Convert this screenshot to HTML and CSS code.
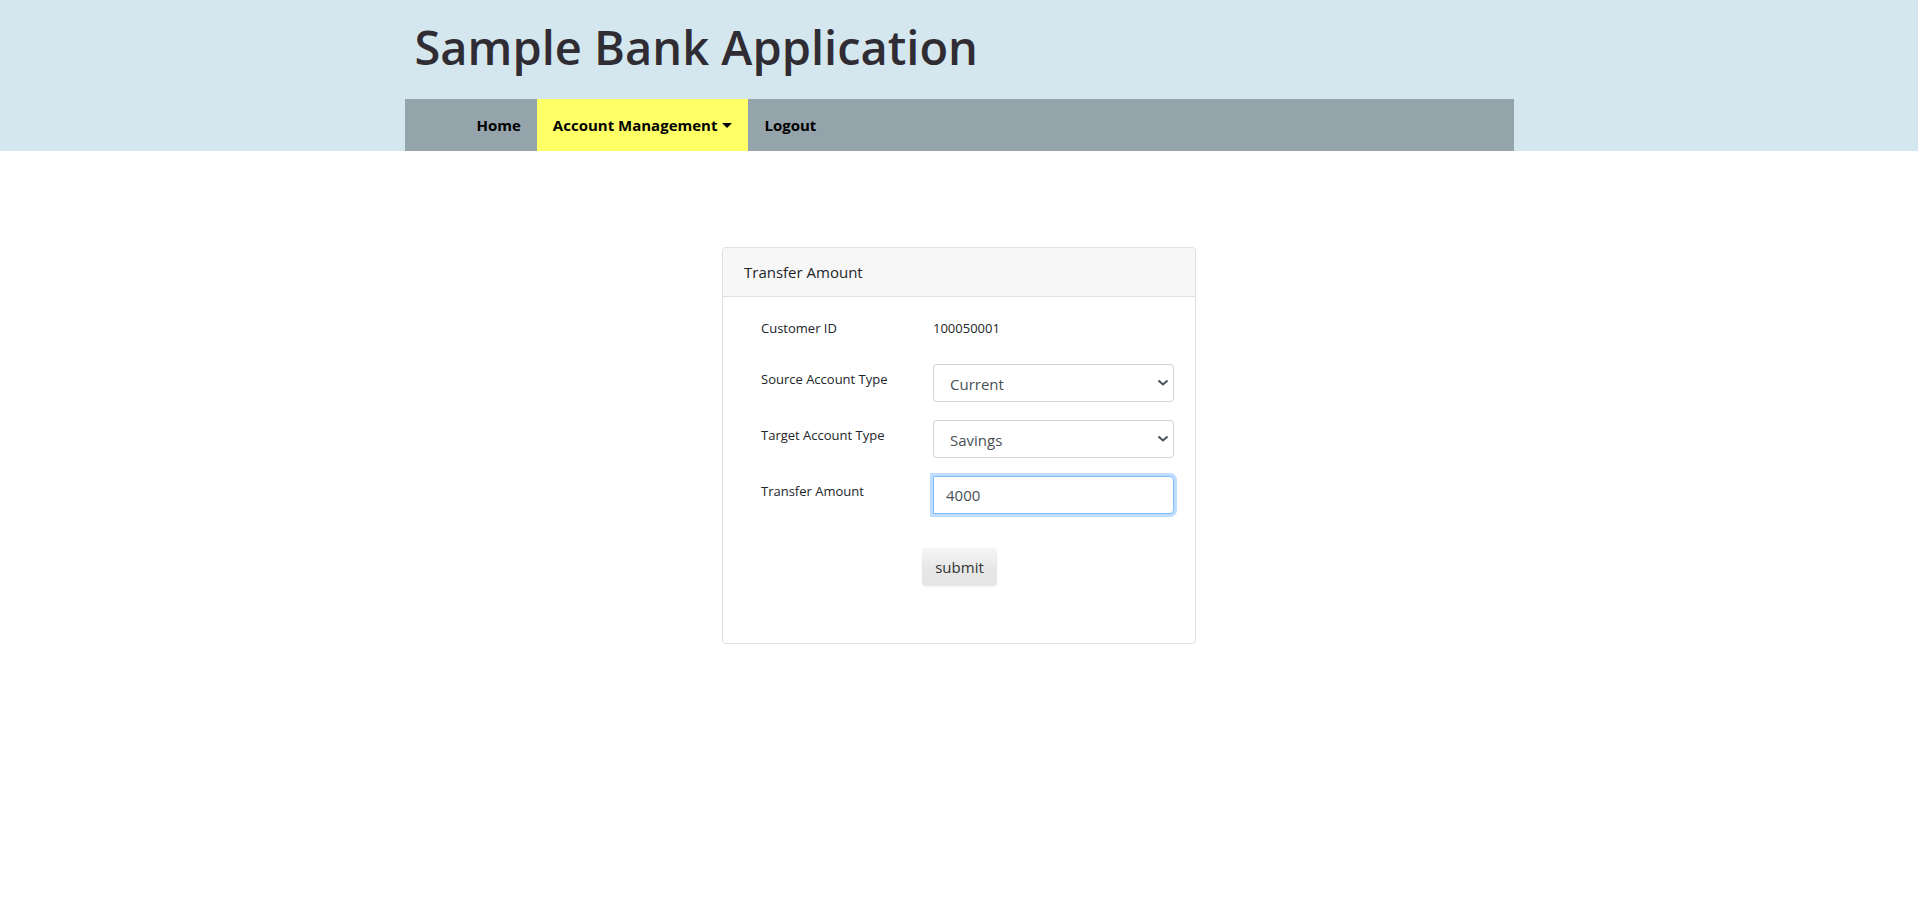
FILE: index.html
```html
<!DOCTYPE html>
<html lang="en">
<head>
<meta charset="utf-8">
<meta name="viewport" content="width=device-width, initial-scale=1">
<title>Sample Bank Application</title>
<link rel="stylesheet" href="styles.css">
</head>
<body>
<header class="site-header">
  <div class="container">
    <h1 class="site-title">Sample Bank Application</h1>
    <nav class="navbar">
      <a class="nav-link" href="#">Home</a>
      <a class="nav-link active" href="#">Account Management<span class="caret"></span></a>
      <a class="nav-link" href="#">Logout</a>
    </nav>
  </div>
</header>
<main class="main">
  <section class="card">
    <h2 class="card-header">Transfer Amount</h2>
    <form class="card-body">
      <div class="row id-row">
        <span class="label">Customer ID</span>
        <span class="value">100050001</span>
      </div>
      <div class="row">
        <label class="label" for="source">Source Account Type</label>
        <div class="select-wrap">
          <select class="control" id="source"><option>Current</option><option>Savings</option></select>
          <svg class="chevron" viewBox="0 0 12 8" aria-hidden="true"><path d="M1.500 1.500 6 5.500l4.500-4"/></svg>
        </div>
      </div>
      <div class="row">
        <label class="label" for="target">Target Account Type</label>
        <div class="select-wrap">
          <select class="control" id="target"><option>Savings</option><option>Current</option></select>
          <svg class="chevron" viewBox="0 0 12 8" aria-hidden="true"><path d="M1.500 1.500 6 5.500l4.500-4"/></svg>
        </div>
      </div>
      <div class="row">
        <label class="label" for="amount">Transfer Amount</label>
        <input class="control amount" id="amount" type="text" value="4000">
      </div>
      <button class="submit" type="submit">submit</button>
    </form>
  </section>
</main>
</body>
</html>
```
FILE: styles.css
```css
* { box-sizing: border-box; }

body {
  margin: 0;
  background: #fff;
  color: #212529;
  font: 15px/24px "Open Sans", "Noto Sans", sans-serif;
}

.site-header { background: #d4e7ee; }

.container {
  max-width: 1109px;
  margin: 0 auto;
}

.site-title {
  margin: 0;
  padding: 17px 10px 22px;
  color: #302c33;
  font-size: 47px;
  font-weight: 600;
  line-height: 60px;
}

.navbar {
  display: flex;
  padding-left: 56px;
  background: #95a3aa;
}

.nav-link {
  display: flex;
  align-items: center;
  padding: 14px 16px;
  color: #000;
  font-weight: 700;
  text-decoration: none;
}

.nav-link.active { background: #ffff66; }

.caret {
  margin-left: 5px;
  border: 5px solid transparent;
  border-top-color: #000;
  border-bottom: 0;
}

.main { padding: 96px 16px; }

.card {
  max-width: 474px;
  margin: 0 auto;
  border: 1px solid #dfdfdf;
  border-radius: 4px;
}

.card-header {
  margin: 0;
  padding: 12px 21px;
  border-bottom: 1px solid #dfdfdf;
  border-radius: 3px 3px 0 0;
  background: #f7f7f7;
  font-size: 15px;
  font-weight: 400;
}

.card-body {
  display: flex;
  flex-direction: column;
  gap: 18px;
  padding: 20px 21px 57px 38px;
}

.row {
  display: grid;
  grid-template-columns: 172px 1fr;
  align-items: start;
}

.id-row { padding-bottom: 7px; }

.label,
.value {
  padding-top: 4px;
  font-size: 13px;
  line-height: 22px;
}

.id-row .label,
.id-row .value { padding-top: 0; }

.select-wrap { position: relative; }

.control {
  display: block;
  width: 100%;
  height: 38px;
  padding: 2px 30px 0 16px;
  border: 1px solid #ced4da;
  border-radius: 4px;
  outline: 0;
  appearance: none;
  background: #fff;
  color: #495057;
  font: inherit;
}

.chevron {
  position: absolute;
  top: 15px;
  right: 5px;
  width: 12px;
  height: 8px;
  fill: none;
  stroke: #495057;
  stroke-width: 2;
  pointer-events: none;
}

.amount {
  padding: 0 12px;
  border-color: #80bdff;
  border-radius: 0 4px 4px 0;
  box-shadow: 0 0 0 3px #bfdeff;
}

.submit {
  align-self: center;
  height: 38px;
  margin: 16px 16px 0 0;
  padding: 0 13px;
  border: 0;
  border-radius: 4px;
  background: linear-gradient(#f5f5f5, #e6e6e6 60%);
  box-shadow: 0 1px 2px #0000000d;
  color: #333;
  font: inherit;
}
```
